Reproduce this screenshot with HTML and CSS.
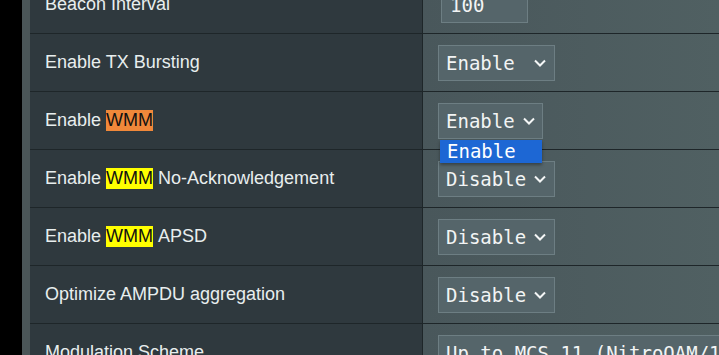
FILE: index.html
```html
<!DOCTYPE html>
<html lang="en">
<head>
  <meta charset="UTF-8">
  <title>Wireless - Professional</title>
  <link rel="stylesheet" href="styles.css">
</head>
<body>
  <div class="edge"></div>
  <div class="rail"></div>
  <div class="table">
    <div class="row">
      <div class="label">Beacon Interval</div>
      <div class="value"><div class="input">100</div></div>
    </div>
    <div class="row">
      <div class="label">Enable TX Bursting</div>
      <div class="value">
        <div class="select wide">Enable<svg class="chev" viewBox="0 0 12 8"><path d="M1 1.5 6 6.5 11 1.5"/></svg></div>
      </div>
    </div>
    <div class="row">
      <div class="label">Enable&nbsp;<span class="find active">WMM</span></div>
      <div class="value">
        <div class="select open">Enable<svg class="chev" viewBox="0 0 12 8"><path d="M1 1.5 6 6.5 11 1.5"/></svg>
          <div class="menu"><div class="option">Enable</div></div>
        </div>
      </div>
    </div>
    <div class="row">
      <div class="label">Enable&nbsp;<span class="find">WMM</span>&nbsp;No-Acknowledgement</div>
      <div class="value">
        <div class="select">Disable<svg class="chev" viewBox="0 0 12 8"><path d="M1 1.5 6 6.5 11 1.5"/></svg></div>
      </div>
    </div>
    <div class="row">
      <div class="label">Enable&nbsp;<span class="find">WMM</span>&nbsp;APSD</div>
      <div class="value">
        <div class="select">Disable<svg class="chev" viewBox="0 0 12 8"><path d="M1 1.5 6 6.5 11 1.5"/></svg></div>
      </div>
    </div>
    <div class="row">
      <div class="label">Optimize AMPDU aggregation</div>
      <div class="value">
        <div class="select">Disable<svg class="chev" viewBox="0 0 12 8"><path d="M1 1.5 6 6.5 11 1.5"/></svg></div>
      </div>
    </div>
    <div class="row">
      <div class="label">Modulation Scheme</div>
      <div class="value">
        <div class="select long">Up to MCS 11 (NitroQAM/1024-QAM)</div>
      </div>
    </div>
  </div>
</body>
</html>
```

FILE: styles.css
```css
body {
  margin: 0;
  background: #000;
  display: flex;
  height: 355px;
  overflow: hidden;
  font-family: 'Liberation Sans', Arial, sans-serif;
}
.edge {
  width: 22px;
  flex: none;
}
.rail {
  width: 8px;
  flex: none;
  background: #4b5658;
}
.table {
  flex: 1;
  min-width: 0;
  margin-top: -24px;
  display: flex;
  flex-direction: column;
}
.row {
  display: flex;
  height: 57px;
  flex: none;
  border-bottom: 1px solid #1e2629;
}
.label {
  width: 377px;
  flex: none;
  padding-left: 15px;
  background: #2f393e;
  color: #e8eeee;
  font-size: 18px;
  display: flex;
  align-items: center;
  white-space: nowrap;
}
.find {
  background: #ffff00;
  color: #111;
}
.find.active {
  background: #f0883a;
}
.value {
  flex: 1;
  min-width: 0;
  border-left: 1px solid #1e2629;
  background: linear-gradient(to right, #49575b, #506062);
  padding-left: 15px;
  display: flex;
  align-items: center;
}
.input, .select {
  height: 34px;
  border: 1px solid #6d7e83;
  background: #55656a;
  color: #f2f4f4;
  font-family: 'DejaVu Sans Mono', 'Liberation Mono', monospace;
  font-size: 19px;
  display: flex;
  align-items: center;
  white-space: nowrap;
  flex: none;
}
.input {
  width: 77px;
  padding-left: 8px;
  margin-left: 3px;
}
.select {
  position: relative;
  width: 108px;
  padding-left: 7px;
}
.select.wide .chev {
  margin-left: 19px;
}
.select.open {
  width: 96px;
  z-index: 2;
}
.select.long {
  width: 330px;
}
.chev {
  width: 12px;
  height: 8px;
  margin-left: 8px;
  fill: none;
  stroke: #f4f6f6;
  stroke-width: 2;
}
.menu {
  position: absolute;
  left: 1px;
  top: 36px;
  width: 102px;
  background: #1d67d4;
  box-shadow: 0 2px 3px rgba(0, 0, 0, 0.35);
}
.option {
  height: 23px;
  line-height: 23px;
  padding-left: 7px;
  color: #fff;
}
```
